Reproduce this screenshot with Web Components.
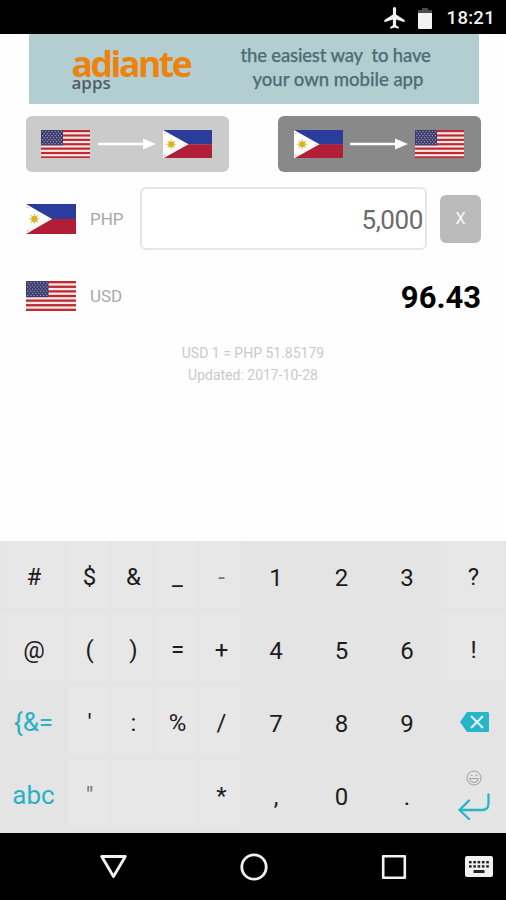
<!DOCTYPE html>
<html lang="en">
<head>
<meta charset="utf-8">
<title>Currency converter</title>
<style>
html,body{margin:0;background:#fefefe}
body{font-family:Roboto,"Liberation Sans",sans-serif}
</style>
</head>
<body>
<converter-app></converter-app>
<script>
const define = (name, html) => customElements.define(name, class extends HTMLElement {
  constructor() {
    super();
    this.attachShadow({ mode: 'open' });
  }
  connectedCallback() {
    const t = document.createElement('template');
    t.innerHTML = typeof html === 'function' ? html(this) : html;
    this.shadowRoot.replaceChildren(t.content.cloneNode(true));
  }
});

/* National flags, stretched to the size of the host */
const usFlag = () => {
  let s = '<rect width="50" height="30" fill="#f6e9e9"/>';
  for (let i = 0; i < 7; i++) s += `<rect y="${(i * 4.615).toFixed(2)}" width="50" height="2.31" fill="#bd2a30"/>`;
  s += '<rect width="22.5" height="16.15" fill="#3c3b6e"/>';
  for (let r = 0; r < 7; r++) for (let c = 0; c < (r % 2 ? 6 : 7); c++)
    s += `<circle cx="${1.7 + c * 3.2 + (r % 2 ? 1.6 : 0)}" cy="${1.7 + r * 2.12}" r=".65" fill="#a9a9c6"/>`;
  return s;
};
const phFlag = () => {
  let rays = '';
  for (let i = 0; i < 8; i++) rays += `<path d="M-.9 0L-.5-5.4L0-5L.5-5.4L.9 0Z" transform="translate(8.4 15) rotate(${i * 45})"/>`;
  return `<rect width="50" height="15" fill="#2b3c9c"/><rect y="15" width="50" height="15" fill="#b01f37"/>
  <path d="M0 0L26 15L0 30Z" fill="#fff"/><g fill="#dfc45a">${rays}<circle cx="8.4" cy="15" r="3" fill="#d9b226"/>
  <circle cx="1.7" cy="3.4" r=".9"/><circle cx="1.7" cy="26.6" r=".9"/><circle cx="22.4" cy="15" r=".8"/></g>`;
};
define('country-flag', el => `<style>:host{display:block;width:50px;height:30px}svg{display:block;width:100%;height:100%}</style>
<svg viewBox="0 0 50 30" preserveAspectRatio="none">${el.getAttribute('code') === 'us' ? usFlag() : phFlag()}</svg>`);

define('status-bar', `<style>
:host{display:flex;box-sizing:border-box;height:34px;background:#000;color:#f2f2f2;align-items:center;justify-content:flex-end;padding:2px 11px 0 0}
.plane{margin-right:14px}.bat{margin-right:14px}
span{font-size:18.500px;font-weight:500;letter-spacing:.3px;line-height:20px}
svg{display:block}
.bat{margin-right:15px;margin-left:-1px}
</style>
<svg class="plane" width="21" height="22" viewBox="0 0 21 22"><path d="M10.5 0C9.5 0 8.9.9 8.9 2V7.6L.4 13V15.2L8.900 12.600V18.200L6.300 20V21.700L10.500 20.600L14.700 21.700V20L12.100 18.200V12.600L20.600 15.200V13L12.100 7.600V2C12.100.900 11.500 0 10.500 0Z" fill="#f2f2f2"/></svg>
<svg class="bat" width="14" height="21" viewBox="0 0 14 21"><path d="M4 0H10V2H14V6H0V2H4Z" fill="#4b4b4b"/><path d="M0 5H14V20Q14 21 13 21H1Q0 21 0 20Z" fill="#f2f2f2"/></svg>
<span>18:21</span>`);

define('ad-banner', `<style>
:host{display:flex;box-sizing:border-box;width:450px;height:70px;margin-left:28.500px;background:#b3ced1;font-family:Lato,"Open Sans",sans-serif}
.logo{width:212px;padding:16px 0 0 43px;box-sizing:border-box}
.name{font:700 35.500px/27px "Open Sans",sans-serif;letter-spacing:-2.450px;color:#ed820e}
.apps{font:600 17px/14px "Open Sans",sans-serif;letter-spacing:0;color:#4f5e66;margin-top:-1px}
.tag{font-weight:500;font-size:18.500px;line-height:24px;color:#4e6d75;white-space:pre;padding-top:9px;-webkit-text-stroke:.25px #4e6d75}
.tag div:first-child{letter-spacing:-.17px}
.tag div:last-child{padding-left:12px}
</style>
<div class="logo"><div class="name">adiante</div><div class="apps">apps</div></div>
<div class="tag"><div>the easiest way  to have</div><div>your own mobile app</div></div>`);

define('direction-button', el => `<style>
:host{display:flex;box-sizing:border-box;width:203px;height:56px;border-radius:6px;padding:0 17px 0 15.500px;align-items:center;justify-content:space-between;background:#cbcbcb}
:host([active]){background:#898989}
country-flag{width:49px;height:28.500px}
svg{margin-left:1px}
</style>
<country-flag code="${el.getAttribute('from')}"></country-flag>
<svg width="58" height="12" viewBox="0 0 58 12"><path d="M0 4.7H45V.5L58 6L45 11.5V7.3H0Z" fill="#fff"/></svg>
<country-flag code="${el.getAttribute('to')}"></country-flag>`);

define('currency-row', el => `<style>
:host{display:flex;align-items:center;padding:0 25px 0 26px}
span{width:50px;margin-left:14px;font-size:17px;color:#a9a9a9}
</style>
<country-flag code="${el.getAttribute('flag')}"></country-flag><span>${el.getAttribute('code')}</span><slot></slot>`);

define('amount-field', `<style>
:host{display:flex;box-sizing:border-box;width:287px;height:63px;border:2px solid #e6e6e6;border-radius:6px;background:#fff;align-items:center;justify-content:flex-end;padding:2px 2px 0 0;font-size:26px;letter-spacing:-.4px;color:#6b6b6b}
</style><slot></slot>`);

define('clear-button', `<style>
:host{display:flex;width:41px;height:48px;margin-left:13px;border-radius:6px;background:#bababa;color:#fafafa;font-size:16px;align-items:center;justify-content:center}
</style><slot></slot>`);

define('key-cap', `<style>
:host{display:flex;align-items:center;justify-content:center;font-size:24px;line-height:28px;color:#1c1c1c;box-sizing:border-box}
:host([sym]){background:#e7e7e7;margin:0 2px 6px 1px;padding:4px 0 0 2px}
:host([wide]){grid-column:span 2}
:host([mode]){color:#2bb0c4;font-size:26px;padding-bottom:3px}
:host([light]){color:#777}
</style><slot></slot>`);

define('key-board', `<style>
:host{display:grid;height:292px;background:#e4e4e4;grid-template-columns:67px 44px 44px 44px 44px 66px 65px 66px 66px;grid-template-rows:repeat(4,73px)}
svg{display:block}
.enter{flex-direction:column}
</style>
<key-cap sym>#</key-cap><key-cap sym>$</key-cap><key-cap sym>&amp;</key-cap><key-cap sym>_</key-cap><key-cap sym light>-</key-cap><key-cap>1</key-cap><key-cap>2</key-cap><key-cap>3</key-cap><key-cap sym>?</key-cap>
<key-cap sym>@</key-cap><key-cap sym>(</key-cap><key-cap sym>)</key-cap><key-cap sym>=</key-cap><key-cap sym>+</key-cap><key-cap>4</key-cap><key-cap>5</key-cap><key-cap>6</key-cap><key-cap sym>!</key-cap>
<key-cap mode>{&amp;=</key-cap><key-cap sym>'</key-cap><key-cap sym>:</key-cap><key-cap sym>%</key-cap><key-cap sym>/</key-cap><key-cap>7</key-cap><key-cap>8</key-cap><key-cap>9</key-cap>
<key-cap><svg width="30" height="20" viewBox="0 0 30 20" style="margin:0 0 3px 3px"><path d="M7 0H27.5Q29 0 29 1.500V18.500Q29 20 27.500 20H7L0 10Z" fill="#27b5ca"/><path d="M11 4L23 16M23 4L11 16" stroke="#e8f6f8" stroke-width="2"/></svg></key-cap>
<key-cap mode>abc</key-cap><key-cap sym light>"</key-cap><key-cap sym wide></key-cap><key-cap sym>*</key-cap><key-cap>,</key-cap><key-cap>0</key-cap><key-cap>.</key-cap>
<key-cap class="enter"><svg width="16" height="16" viewBox="0 0 16 16" fill="none" stroke="#a0a0a0" style="margin:-4px 0 7px 1px"><circle cx="8" cy="8" r="7"/><path d="M3.500 8.500H12.500Q12 12.500 8 12.500T3.500 8.500M4.500 6L5.500 5L6.500 6M9.500 6L10.500 5L11.500 6"/></svg>
<svg width="32" height="27" viewBox="0 0 32 27" fill="none" stroke="#27b5ca" stroke-width="2.300" stroke-linecap="round" stroke-linejoin="round" style="margin-left:2px"><path d="M30.500 1.500V10Q30.500 17 24 17H1.500M11 7.500L1.500 17L11 26"/></svg></key-cap>`);

let keys = '';
for (let r = 0; r < 2; r++) for (let c = 0; c < 5; c++) keys += `<rect x="${4 + c * 4.3}" y="${5 + r * 4.2}" width="2.600" height="2.400"/>`;
define('nav-bar', `<style>
:host{display:grid;grid-template-columns:43px 140px 141px 140px 42px;height:67px;background:#000;align-items:center;justify-items:center}
svg{display:block}
.kb{margin-right:13px}
</style>
<i></i>
<svg width="27" height="24" viewBox="0 0 27 24" fill="none" stroke="#f2f2f2" stroke-width="2.800" stroke-linejoin="round"><path d="M1.700 1.500H25.300L13.500 21.500Z"/></svg>
<svg width="28" height="28" viewBox="0 0 28 28" fill="none" stroke="#f2f2f2" stroke-width="2.800"><circle cx="14" cy="14" r="12.200"/></svg>
<svg width="26" height="26" viewBox="0 0 26 26" fill="none" stroke="#f2f2f2" stroke-width="2.600" stroke-linejoin="round"><rect x="2.200" y="2.200" width="21.600" height="21.600"/></svg>
<svg class="kb" width="28" height="21" viewBox="0 0 28 21"><rect width="28" height="21" rx="2" fill="#f0f0f0"/><g fill="#222">${keys}<rect x="8.500" y="14" width="11" height="3"/></g></svg>`);

define('converter-app', `<style>
:host{display:flex;flex-direction:column;width:506px;height:900px;background:#fefefe;overflow:hidden}
.dirs{display:flex;justify-content:space-between;padding:0 25px 0 25.500px;margin-top:12px}
.from{margin-top:15px;height:63px}
.to{margin-top:30px;height:32px}
.result{flex:1;text-align:right;font-weight:700;font-size:31px;line-height:32px;padding-top:3px;color:#000}
.note{margin-top:31px;text-align:center;font-size:14px;line-height:21.500px;color:#cacaca;flex:1}
</style>
<status-bar></status-bar>
<ad-banner></ad-banner>
<div class="dirs"><direction-button from="us" to="ph"></direction-button><direction-button active from="ph" to="us"></direction-button></div>
<currency-row class="from" flag="ph" code="PHP"><amount-field>5,000</amount-field><clear-button>X</clear-button></currency-row>
<currency-row class="to" flag="us" code="USD"><div class="result">96.43</div></currency-row>
<div class="note">USD 1 = PHP 51.85179<br>Updated: 2017-10-28</div>
<key-board></key-board>
<nav-bar></nav-bar>`);
</script>
</body>
</html>
